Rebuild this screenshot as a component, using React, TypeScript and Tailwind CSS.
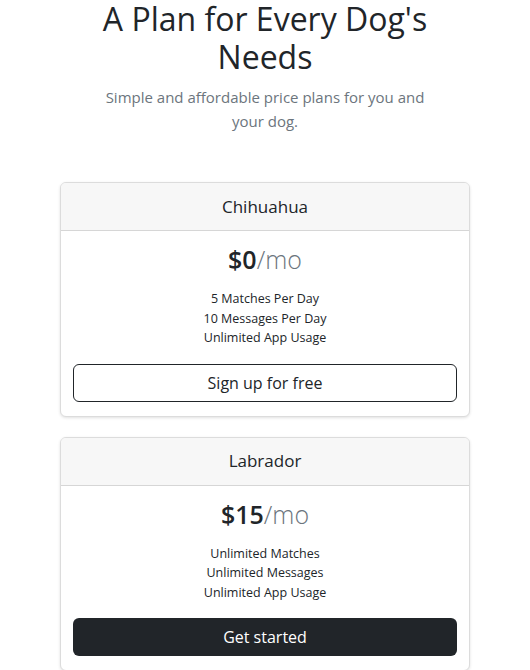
import React from 'react';

const PLANS = [
  {
    name: 'Chihuahua',
    price: '$0',
    features: ['5 Matches Per Day', '10 Messages Per Day', 'Unlimited App Usage'],
    cta: 'Sign up for free',
    solid: false,
  },
  {
    name: 'Labrador',
    price: '$15',
    features: ['Unlimited Matches', 'Unlimited Messages', 'Unlimited App Usage'],
    cta: 'Get started',
    solid: true,
  },
];

const App: React.FC = () => {
  return (
    <div className="min-h-screen bg-white text-[#212529] font-['Open_Sans',sans-serif]">
      <div className="mx-auto max-w-[350px] text-center">
        <h1 className="text-[32px] leading-[38px] font-normal">A Plan for Every Dog's Needs</h1>
        <p className="mt-[9px] text-[15px] leading-[24px] text-[#6c757d]">
          Simple and affordable price plans for you and your dog.
        </p>
      </div>

      <div className="mx-[60px] mt-[49px] flex flex-col gap-[20px]">
        {PLANS.map(plan => (
          <div key={plan.name} className="rounded-[6px] border border-[#dcdcdc] bg-white shadow-[0_1px_3px_rgba(0,0,0,0.12)] overflow-hidden">
            <div className="h-[48px] flex items-center justify-center bg-[#f7f7f7] border-b border-[#d6d6d6] text-[17px]">
              {plan.name}
            </div>
            <div className="px-[12px] pt-[8px] pb-[14px] text-center">
              <div className="text-[25px] leading-[40px]">
                <span className="font-semibold">{plan.price}</span>
                <span className="text-[#6c757d] font-light">/mo</span>
              </div>
              <ul className="mt-[10px] mb-[16px] text-[12.5px] leading-[19.5px]">
                {plan.features.map(f => (
                  <li key={f}>{f}</li>
                ))}
              </ul>
              <button
                className={`w-full h-[38px] rounded-[6px] text-[16px] ${
                  plan.solid ? 'bg-[#212529] text-white' : 'border border-[#212529] text-[#212529] bg-white'
                }`}
              >
                {plan.cta}
              </button>
            </div>
          </div>
        ))}
      </div>
    </div>
  );
};

export default App;
